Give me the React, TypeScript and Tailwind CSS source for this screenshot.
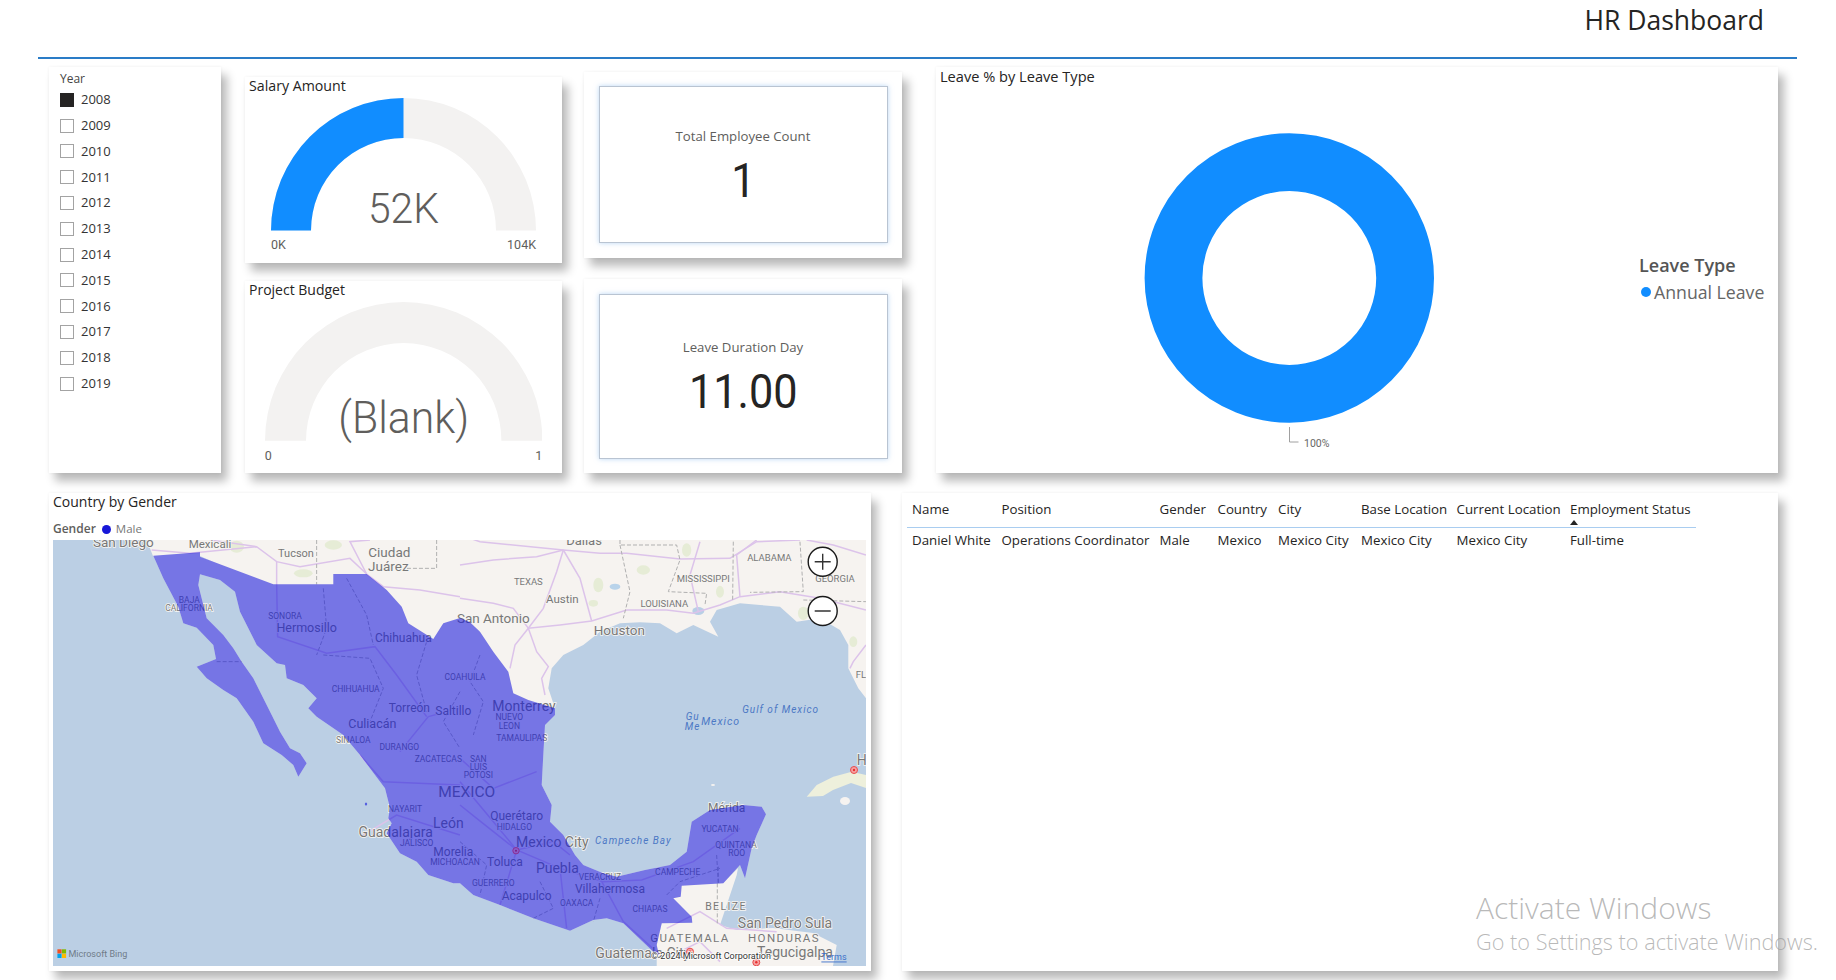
import type { ReactNode } from "react";

const years = [2008, 2009, 2010, 2011, 2012, 2013, 2014, 2015, 2016, 2017, 2018, 2019];

const columns = [
  { name: "Name", value: "Daniel White", width: "w-[89.5px]" },
  { name: "Position", value: "Operations Coordinator", width: "w-[158px]" },
  { name: "Gender", value: "Male", width: "w-[58px]" },
  { name: "Country", value: "Mexico", width: "w-[60.5px]" },
  { name: "City", value: "Mexico City", width: "w-[83px]" },
  { name: "Base Location", value: "Mexico City", width: "w-[95.5px]" },
  { name: "Current Location", value: "Mexico City", width: "w-[113.5px]" },
  { name: "Employment Status", value: "Full-time", width: "w-[126px]" },
];

const panel = "bg-white shadow-[6px_8px_9px_rgba(0,0,0,0.28),0_0_3px_rgba(0,0,0,0.06)]";

// map tiles were traced in four groups, each with its own offset
const origin: Record<string, [number, number]> = {
  a: [-3, -5],
  b: [407, -5],
  c: [-3, 215],
  d: [407, 215],
};

type Label = [string, string, number, number, number, string?];

const labels: Label[] = [
  ["San Diego", "a", 220, 22, 13.5],
  ["Mexicali", "a", 480, 28, 11.5],
  ["Tucson", "a", 738, 55, 11],
  ["Ciudad", "a", 1018, 50, 13.5],
  ["Juárez", "a", 1015, 92, 13.5],
  ["BAJA", "a", 418, 196, 8.5],
  ["CALIFORNIA", "a", 417, 220, 8.5],
  ["SONORA", "a", 705, 243, 8.5],
  ["Hermosillo", "a", 770, 278, 12.5],
  ["Chihuahua", "a", 1060, 310, 12],
  ["CHIHUAHUA", "a", 917, 462, 8.5],
  ["COAHUILA", "b", 15, 425, 8.5],
  ["Torreón", "a", 1078, 518, 12],
  ["Saltillo", "a", 1210, 528, 12],
  ["Culiacán", "a", 967, 566, 12.5],
  ["SINALOA", "a", 910, 615, 8.5],
  ["DURANGO", "a", 1048, 637, 8.5],
  ["Dallas", "b", 372, 15, 13],
  ["ALABAMA", "b", 928, 67, 9.5],
  ["GEORGIA", "b", 1125, 130, 9.5],
  ["MISSISSIPPI", "b", 730, 130, 9.5],
  ["TEXAS", "b", 205, 140, 9.5],
  ["Austin", "b", 307, 193, 11.5],
  ["LOUISIANA", "b", 613, 205, 9.5],
  ["San Antonio", "b", 100, 250, 13.5],
  ["Houston", "b", 478, 285, 13.5],
  ["FL", "b", 1203, 418, 9.5],
  ["Monterrey", "b", 192, 512, 14],
  ["NUEVO", "b", 148, 547, 8.5],
  ["LEON", "b", 148, 572, 8.5],
  ["TAMAULIPAS", "b", 185, 610, 8.5],
  ["ZACATECAS", "c", 1165, 12, 8.5],
  ["NAYARIT", "c", 1065, 163, 8.5],
  ["León", "c", 1195, 205, 14],
  ["Guadalajara", "c", 1037, 232, 14],
  ["JALISCO", "c", 1100, 263, 8.5],
  ["Morelia", "c", 1210, 292, 12],
  ["MICHOACAN", "c", 1215, 321, 8.5],
  ["SAN", "d", 55, 12, 8.5],
  ["LUIS", "d", 55, 36, 8.5],
  ["POTOSI", "d", 55, 60, 8.5],
  ["MEXICO", "d", 20, 110, 15.5],
  ["Querétaro", "d", 170, 183, 12],
  ["HIDALGO", "d", 163, 217, 8.5],
  ["Mexico City", "d", 277, 260, 14],
  ["Toluca", "d", 135, 320, 12],
  ["Puebla", "d", 292, 338, 14],
  ["GUERRERO", "d", 100, 385, 8.5],
  ["Acapulco", "d", 200, 422, 12],
  ["VERACRUZ", "d", 420, 366, 8.5],
  ["Villahermosa", "d", 450, 403, 12],
  ["OAXACA", "d", 350, 443, 8.5],
  ["CHIAPAS", "d", 570, 461, 8.5],
  ["CAMPECHE", "d", 653, 350, 8.5],
  ["Mérida", "d", 800, 160, 12],
  ["YUCATAN", "d", 780, 222, 8.5],
  ["QUINTANA", "d", 828, 270, 8.5],
  ["ROO", "d", 830, 294, 8.5],
  ["BELIZE", "d", 798, 453, 10.5, "wide"],
  ["GUATEMALA", "d", 690, 550, 11.5, "wide"],
  ["San Pedro Sula", "d", 975, 505, 14],
  ["HONDURAS", "d", 972, 550, 11.5, "wide"],
  ["Tegucigalpa", "d", 1005, 592, 14],
  ["Guatemala City", "d", 548, 593, 14],
  ["H", "d", 1205, 15, 14],
];

const waterLabels: Label[] = [
  ["Gulf of Mexico", "b", 962, 522, 10],
  ["Gu", "b", 698, 544, 10],
  ["Me", "b", 698, 575, 10],
  ["Mexico", "b", 782, 558, 10.5],
  ["Campeche Bay", "d", 520, 255, 10],
];

const roads: [string, string][] = [
  ["b", "0,90 100,75 230,65 310,45 420,55 500,55 660,72 810,70 890,20 1020,15"],
  ["b", "0,190 100,205 160,220 205,280 300,270 395,258 500,225 620,225 700,235 780,210 840,185 960,170 1080,190 1218,225"],
  ["b", "310,45 290,110 250,220 205,280 165,330 150,400"],
  ["b", "310,45 360,130 395,258"],
  ["b", "205,280 230,350 265,395 245,430 255,480"],
  ["b", "715,230 690,120 720,20"],
  ["b", "1218,60 1120,30 1040,15"],
  ["b", "840,185 830,60 890,15"],
  ["b", "1170,400 1180,380 1218,330"],
  ["b", "0,0 60,20 310,45"],
  ["a", "305,45 420,55 620,35 680,80 750,95 900,70 950,117 1000,155 1110,165 1230,185"],
  ["a", "680,80 680,145 683,305 830,355 975,335 1040,420 1130,545"],
  ["a", "950,117 900,20 960,15"],
  ["a", "1135,545 1230,520"],
  ["a", "1135,545 1050,650"],
  ["a", "480,15 620,35"],
  ["d", "0,80 100,200 170,285 300,340 430,380 545,375 700,320 840,220"],
  ["d", "170,285 280,260 330,300"],
  ["d", "0,150 50,190 170,285 120,450"],
  ["d", "300,340 320,520"],
  ["d", "0,10 100,100 230,50"],
  ["d", "420,370 490,500 600,600"],
  ["c", "940,240 1040,180 1230,240"],
  ["c", "930,0 1000,80 1230,90"],
  ["d", "620,520 720,470 800,520 950,530"],
  ["d", "640,600 720,560 780,620"],
];

const borders: [string, string][] = [
  ["a", "800,15 800,148"],
  ["a", "1160,15 1160,100 1060,100"],
  ["a", "820,160 830,280 800,360"],
  ["a", "500,380 575,380"],
  ["a", "1130,320 1100,420 1130,530"],
  ["a", "820,360 960,370 1000,460 960,560"],
  ["a", "890,130 950,240 970,330"],
  ["a", "1230,470 1180,560 1230,640"],
  ["b", "480,15 480,30 650,30 660,75 625,170 740,175 735,210"],
  ["b", "480,30 510,170 490,250"],
  ["b", "820,20 818,200"],
  ["b", "1020,20 1030,170 870,172"],
  ["b", "1030,195 1218,200"],
  ["b", "60,360 30,440 70,500 40,600"],
  ["d", "772,385 772,510"],
  ["d", "775,335 775,385"],
  ["d", "770,300 775,385"],
  ["d", "620,420 660,380 780,340"],
  ["d", "0,260 80,330 60,420"],
  ["d", "240,380 280,460 220,490"],
  ["d", "420,430 400,500"],
];

function Title({ children, size = "text-[14px]" }: { children: ReactNode; size?: string }) {
  return <div className={`${size} leading-[18px] text-[#252423]`}>{children}</div>;
}

function Gauge({ radius, inner, value, valueSize, min, max, filled, labelGap }: { radius: number; inner: number; value: string; valueSize: string; min: string; max: string; filled: boolean; labelGap: string }) {
  const w = radius * 2;
  const cx = radius;
  const arc = `M0 ${radius}A${radius} ${radius} 0 0 1 ${w} ${radius}L${cx + inner} ${radius}A${inner} ${inner} 0 0 0 ${cx - inner} ${radius}Z`;
  const half = `M0 ${radius}A${radius} ${radius} 0 0 1 ${cx} 0L${cx} ${radius - inner}A${inner} ${inner} 0 0 0 ${cx - inner} ${radius}Z`;
  return (
    <div className="mx-auto flex flex-col" style={{ width: w }}>
      <div className="relative">
        <svg width={w} height={radius} className="block">
          <path d={arc} fill="#f3f2f1" />
          {filled && <path d={half} fill="#118dff" />}
        </svg>
        <div className={`absolute inset-x-0 bottom-[-1px] text-center font-['Roboto',sans-serif] font-light text-[#605e5c] ${valueSize} leading-[48px] scale-x-[0.95]`}>
          {value}
        </div>
      </div>
      <div className={`${labelGap} flex justify-between font-['Roboto',sans-serif] text-[12.5px] leading-[16px] text-[#605e5c]`}>
        <span>{min}</span>
        <span>{max}</span>
      </div>
    </div>
  );
}

function Kpi({ label, value, outer, inner, labelTop }: { label: string; value: string; outer: string; inner: string; labelTop: string }) {
  return (
    <div className={`${panel} ${outer} flex justify-center`}>
      <div className={`${inner} w-[289px] border border-[#b9c4d2] shadow-[0_0_5px_rgba(130,180,235,0.55)] flex flex-col items-center ${labelTop}`}>
        <div className="text-[13.2px] leading-[18px] text-[#605e5c]">{label}</div>
        <div className="font-['Roboto',sans-serif] font-normal text-[#252423] text-[48px] leading-[54px] mt-[9px] scale-x-[0.9]">{value}</div>
      </div>
    </div>
  );
}

function MapView() {
  const text = (l: Label, key: number, fill: string, halo: boolean, italic: boolean) => {
    const [t, g, x, y, size, kind] = l;
    const [ox, oy] = origin[g];
    return (
      <text
        key={key}
        x={ox + x / 3}
        y={oy + y / 3}
        fontSize={size}
        fill={fill}
        textAnchor="middle"
        dominantBaseline="central"
        fontStyle={italic ? "italic" : undefined}
        letterSpacing={italic ? 1 : kind === "wide" ? 1.4 : undefined}
        stroke={halo ? "#f7f5f2" : undefined}
        strokeWidth={halo ? 1.6 : undefined}
        paintOrder="stroke"
      >
        {t}
      </text>
    );
  };
  const mexico =
    "100.3,15.7 147,12.3 147,16.7 220.3,44.3 280.3,44.3 280.3,34 313.7,34 333.7,50 348.7,66.7 355.3,83.3 380.3,99 390.3,83.3 407,78 417,82.3 427,91.7 440.3,111.7 455.3,131.7 460.3,153.3 475.3,160 502,168.3 502,175 492,185 490.3,215 488.7,245 498.7,265 497,281.7 510.3,295 522,315 530.3,325 550.3,333.3 563.7,336.7 592,330 617,325 633.7,311.7 638.7,281.7 657,270 690.3,265 708.7,266.7 713,274.3 703.7,295 698.7,308 692,338.3 687,325 670.3,343.3 628.7,345.7 627.7,356.7 620.3,358.3 638.7,376.7 639.3,382.7 608.7,383.3 603.7,405 606,415 600.3,411.7 570.3,383.3 553.7,378.3 540.3,380 517,390.7 480.3,378.3 447,365 420.3,355 407,343.3 400.3,343.3 375.3,335 363.7,321.7 347,313.3 333.7,293.3 338.7,283.3 335.3,278.3 337,268 332,248.3 307,215 290.3,195 263.7,176.7 255.3,168.3 263.7,158.3 250.3,145 233.7,138.3 232,125 223.7,123.3 203.7,105 187,71.7 182,51.7 167,40 147,34.3 145.3,45 153.7,78.3 170.3,95 180.3,108.3 188.7,121.7 200.3,138.3 210.3,158.3 218.7,175 227,191.7 237,208.3 247,213.3 253.7,223.3 245.3,236.7 240.3,225 228.7,215 210.3,203.3 200.3,181.7 183.7,158.3 170.3,150 153.7,138.3 143.7,126.7 163,119 160.3,105 143.7,87.7 130.3,83.3 125.3,66.7 110.3,38.3";
  const islands = "171,95 176,102 172,104 168,96 M195,105 198,98 200,107 194,110";
  return (
    <svg width={813} height={426} className="block font-['Roboto',sans-serif]">
      <rect width={813} height={426} fill="#bbcfe4" />
      {/* land */}
      <polygon points={mexico} fill="#f6f3f0" />
      <polygon
        fill="#f6f3f0"
        points="93.7,0 100,16 147,16 502,175 502,168.3 495.3,148.3 498.7,128.3 510.3,115 530.3,105 547,91.7 567,83.3 587,82.3 607,83.3 623.7,93.3 640.3,85 665.3,96.7 657,81.7 663.7,70 687,63.3 707,65 727,66.7 743.7,81.7 767,78.3 787,90 795.3,105 795.3,128.3 805.3,148.3 813,158.3 813,0"
      />
      <polygon
        fill="#f6f3f0"
        points="628,345 670,343 685,328 683.7,335 673.7,365 667,385 683.7,390 720,388 760,393 783.7,405 780,426 603.7,426 603.7,405 608.7,383 620,358"
      />
      <polygon fill="#eef0dc" points="753.7,256.7 763.7,245 780.3,236.7 798.7,231.7 813,235 813,248 798,243 780,250 770,256" />
      <ellipse cx="792" cy="261" rx="5" ry="4" fill="#f6f3f0" />
      <ellipse cx="660" cy="245" rx="2" ry="1" fill="#f6f3f0" />
      <path d={islands} fill="#f6f3f0" />
      <g transform="translate(407,-5) scale(.3333)" fill="#e6ecd6">
        <ellipse cx="415" cy="150" rx="15" ry="22" />
        <ellipse cx="550" cy="105" rx="20" ry="14" />
        <ellipse cx="680" cy="45" rx="14" ry="20" />
        <ellipse cx="780" cy="170" rx="12" ry="18" />
        <ellipse cx="1030" cy="235" rx="16" ry="20" />
        <ellipse cx="400" cy="205" rx="14" ry="10" />
        <ellipse cx="1180" cy="320" rx="12" ry="16" />
        <ellipse cx="465" cy="155" fill="#b9d3ea" rx="16" ry="9" />
        <ellipse cx="715" cy="228" fill="#b9cfe6" rx="18" ry="12" />
      </g>
      <g transform="translate(-3,-5) scale(.3333)" fill="#e6ecd6">
        <ellipse cx="760" cy="115" rx="28" ry="12" />
        <ellipse cx="850" cy="30" rx="26" ry="14" />
        <ellipse cx="560" cy="35" rx="22" ry="18" />
      </g>
      {roads.map(([g, pts], i) => (
        <polyline key={i} points={pts} fill="none" stroke="#dcc3ea" strokeWidth={4.5} transform={`translate(${origin[g][0]},${origin[g][1]}) scale(.3333)`} />
      ))}
      {borders.map(([g, pts], i) => (
        <polyline key={i} points={pts} fill="none" stroke="#b0b0b0" strokeWidth={3} strokeDasharray="12 6" transform={`translate(${origin[g][0]},${origin[g][1]}) scale(.3333)`} />
      ))}
      {labels.map((l, i) => text(l, i, "#787878", true, false))}
      {/* gender layer */}
      <polygon points={mexico} fill="#1515db" fillOpacity={0.57} />
      <path d={islands} fill="#1515db" fillOpacity={0.57} />
      <ellipse cx="313" cy="264" rx="1.2" ry="1.6" fill="#5560e0" />
      {waterLabels.map((l, i) => text(l, i, "#4c78c4", false, true))}
      {[[637, 411.7], [703.3, 422.3], [801, 230]].map(([x, y]) => (
        <g key={x}>
          <circle cx={x} cy={y} r={3.5} fill="#f6a3a3" stroke="#e84c4c" strokeWidth={1} />
          <circle cx={x} cy={y} r={1.2} fill="#e83030" />
        </g>
      ))}
      <circle cx={463} cy={310.7} r={3.2} fill="#8c5cc8" stroke="#8a2f95" strokeWidth={1} />
      <circle cx={463} cy={310.7} r={1} fill="#7a1f85" />
      {/* bing logo */}
      <rect x={4.4} y={409.3} width={4.2} height={4.2} fill="#f25022" />
      <rect x={8.9} y={409.3} width={4.2} height={4.2} fill="#7fba00" />
      <rect x={4.4} y={413.8} width={4.2} height={4.2} fill="#00a4ef" />
      <rect x={8.9} y={413.8} width={4.2} height={4.2} fill="#ffb900" />
      <text x={15.5} y={414} fontSize={9} fill="#6f7b88" dominantBaseline="central">Microsoft Bing</text>
      <text x={658} y={416} fontSize={9} fill="#333" textAnchor="middle" dominantBaseline="central" stroke="#fff" strokeWidth={1.5} paintOrder="stroke">© 2024 Microsoft Corporation</text>
      <text x={781} y={416.5} fontSize={9} fill="#3a6fc9" textDecoration="underline" textAnchor="middle" dominantBaseline="central">Terms</text>
      {/* zoom buttons */}
      <g stroke="#1a1a1a" fill="#fff">
        <circle cx={769.7} cy={21.7} r={14.5} strokeWidth={1.4} />
        <circle cx={769.7} cy={71} r={14.5} strokeWidth={1.4} />
        <path d="M761.7 21.7h16M769.7 13.7v16M761.7 71h16" strokeWidth={1.4} fill="none" stroke="#333" />
      </g>
    </svg>
  );
}

export default function App() {
  return (
    <div className="relative w-[1836px] h-[980px] overflow-hidden bg-white font-['Open_Sans',sans-serif]">
      <header className="h-[57px] pr-[72px] flex justify-end pt-[1px]">
        <h1 className="text-[26.5px] leading-[38px] text-[#252423]">HR Dashboard</h1>
      </header>
      <div className="ml-[38px] w-[1759px] h-[2px] bg-[#2a7cc7]" />

      <div className="flex pl-[49px] mt-[8px] h-[406px]">
        {/* year slicer */}
        <aside className={`${panel} w-[172px] h-[406px] pl-[11px] pt-[5px]`}>
          <div className="text-[12px] leading-[14px] text-[#444]">Year</div>
          <ul className="mt-[1px]">
            {years.map((y) => (
              <li key={y} className="h-[25.8px] flex items-center gap-[7px] text-[13px] text-[#333]">
                <span className={y === 2008 ? "w-[14px] h-[14px] bg-[#252423]" : "w-[14px] h-[14px] border border-[#a3a3a3] bg-white"} />
                {y}
              </li>
            ))}
          </ul>
        </aside>

        {/* gauges */}
        <div className="ml-[24px] w-[317px] flex flex-col">
          <section className={`${panel} mt-[10px] h-[186px] px-[4px]`}>
            <Title size="text-[14.2px]">Salary Amount</Title>
            <div className="mt-[3px]">
              <Gauge radius={132.5} inner={92.5} value="52K" valueSize="text-[43px]" min="0K" max="104K" filled labelGap="mt-[6px]" />
            </div>
          </section>
          <section className={`${panel} mt-[18px] h-[192px] px-[4px]`}>
            <Title>Project Budget</Title>
            <div className="mt-[3px]">
              <Gauge radius={138.7} inner={97.7} value="(Blank)" valueSize="text-[45px]" min="0" max="1" filled={false} labelGap="mt-[7px]" />
            </div>
          </section>
        </div>

        {/* kpi cards */}
        <div className="ml-[22px] w-[318px] flex flex-col">
          <Kpi label="Total Employee Count" value="1" outer="mt-[5px] h-[186px] pt-[14px]" inner="h-[157px]" labelTop="pt-[40px]" />
          <Kpi label="Leave Duration Day" value="11.00" outer="mt-[21px] h-[194px] pt-[15px]" inner="h-[165px]" labelTop="pt-[43px]" />
        </div>

        {/* donut */}
        <section className={`${panel} relative ml-[34px] w-[841.5px] h-[406px] pl-[4px]`}>
          <div className="h-[17px]">
            <Title size="text-[14.6px]">Leave % by Leave Type</Title>
          </div>
          <svg width={837} height={389} className="block">
            <circle cx={349.3} cy={194} r={115.8} fill="none" stroke="#118dff" strokeWidth={57.8} />
            <path d="M349.5 343v15h9" fill="none" stroke="#a0a0a0" />
            <text x={364} y={359} fontSize={10.5} fill="#666" dominantBaseline="central" className="font-['Roboto',sans-serif]">100%</text>
          </svg>
          <div className="absolute left-[703px] top-[187px]">
            <div className="text-[18px] leading-[22px] font-semibold text-[#555]">Leave Type</div>
            <div className="mt-[4px] flex items-center gap-[3px] text-[17.7px] leading-[24px] text-[#666] ml-[2px]">
              <span className="w-[10px] h-[10px] rounded-full bg-[#118dff]" />
              Annual Leave
            </div>
          </div>
        </section>
      </div>

      <div className="flex pl-[49px] mt-[20px]">
        {/* map */}
        <section className={`${panel} w-[822px] h-[478px] pl-[4px]`}>
          <Title>Country by Gender</Title>
          <div className="mt-[7px] h-[22px] flex items-center text-[12px] text-[#605e5c]">
            <span className="font-semibold">Gender</span>
            <span className="ml-[6px] w-[9px] h-[9px] rounded-full bg-[#1717d8]" />
            <span className="ml-[5px] text-[11.5px] text-[#777]">Male</span>
          </div>
          <MapView />
        </section>

        {/* table */}
        <section className={`${panel} ml-[31px] w-[875.5px] h-[478px] pl-[5px] pt-[7px]`}>
          <div className="w-[789px]">
            <div className="relative flex h-[27.5px] border-b border-[#a9cdf0] pl-[5px] text-[13.3px] leading-[18px] text-[#252423]">
              {columns.map((c) => (
                <div key={c.name} className={`${c.width} shrink-0 whitespace-nowrap`}>{c.name}</div>
              ))}
              <span className="absolute left-[663px] top-[20px] w-0 h-0 border-x-[4px] border-x-transparent border-b-[5px] border-b-[#252423]" />
            </div>
            <div className="flex pl-[5px] pt-[3px] text-[13.3px] leading-[18px] text-[#252423]">
              {columns.map((c) => (
                <div key={c.name} className={`${c.width} shrink-0 whitespace-nowrap`}>{c.value}</div>
              ))}
            </div>
          </div>
        </section>
      </div>

      {/* windows watermark */}
      <div className="absolute left-[1476px] top-[891px] pointer-events-none text-[#9a9a9a]/70 whitespace-nowrap font-light">
        <div className="text-[30px] leading-[34px]">Activate Windows</div>
        <div className="text-[21.7px] leading-[24px] mt-[5px]">Go to Settings to activate Windows.</div>
      </div>
    </div>
  );
}
